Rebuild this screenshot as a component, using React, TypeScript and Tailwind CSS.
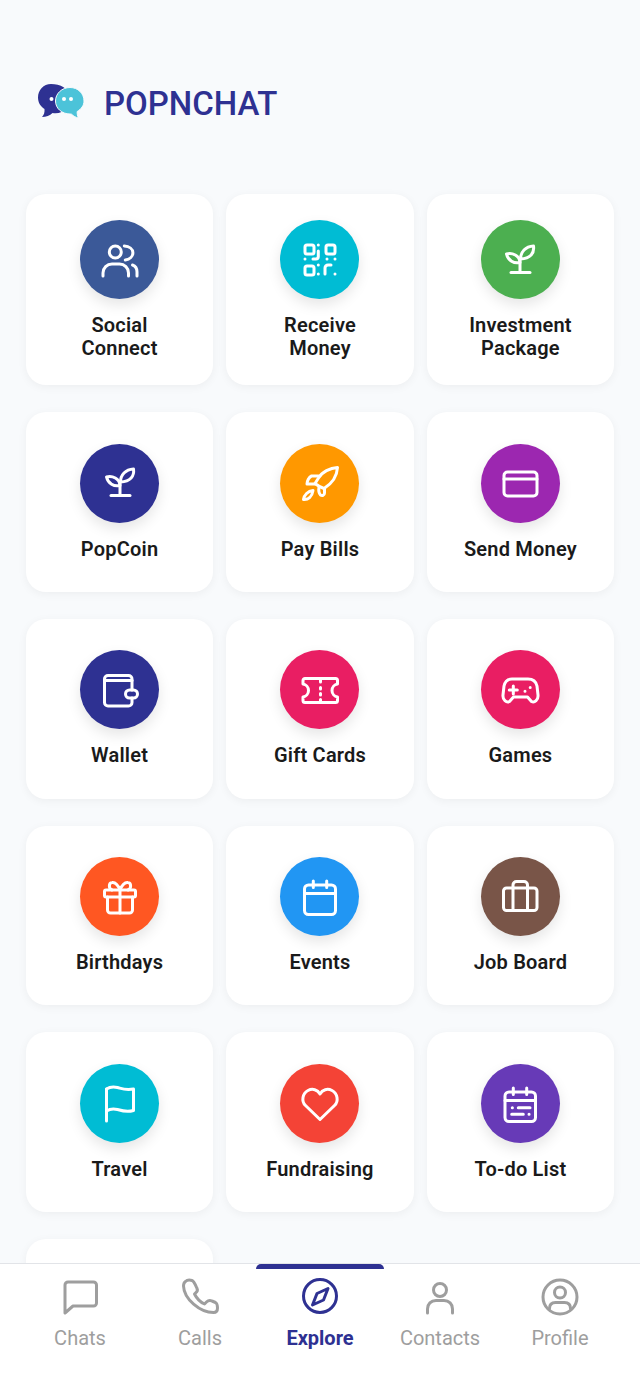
import type { ReactNode } from 'react';

const Glyph = ({ children, width = 3 }: { children: ReactNode; width?: number }) => (
  <svg
    viewBox="0 0 40 40"
    className="w-10 h-10"
    fill="none"
    stroke="currentColor"
    strokeWidth={width}
    strokeLinecap="round"
    strokeLinejoin="round"
  >
    {children}
  </svg>
);

const Sprout = () => (
  <Glyph>
    <path d="M11 32.5h19" />
    <path d="M20 32.5V19" />
    <path d="M6.5 14c6-1.5 13 1.5 13.5 8.5-6 1.5-12-2-13.5-8.5Z" />
    <path d="M33.5 6c1 7-3 12.5-13 13 0-7 5-12.5 13-13Z" />
  </Glyph>
);

const items: { label: ReactNode; bg: string; icon: ReactNode }[] = [
  {
    label: <>Social<br />Connect</>,
    bg: 'bg-[#3b5998]',
    icon: (
      <Glyph>
        <circle cx="15.3" cy="12" r="6" />
        <path d="M24.3 6c5 .3 8.6 3 8.6 6.7s-3 6.7-7.6 7.3" />
        <path d="M3 36v-3c0-5 4-9 9-9h7.5c5 0 9 4 9 9v3" />
        <path d="M32.5 25c3 1 4.5 4 4.5 7v4" />
      </Glyph>
    ),
  },
  {
    label: <>Receive<br />Money</>,
    bg: 'bg-[#00bcd4]',
    icon: (
      <Glyph>
        <rect x="5" y="5" width="9" height="9" rx="2" />
        <rect x="26" y="5" width="9" height="9" rx="2" />
        <rect x="5" y="26" width="9" height="9" rx="2" />
        <path d="M18.3 5v.1M18.3 11v5.5a2.5 2.5 0 0 1-2.5 2.5H13" />
        <path d="M5 19v.1M27 19v.1M35 19v.1M18.3 25v.1M18.3 34v.1M35 34v.1" />
        <path d="M25 34v-6a3 3 0 0 1 3-3h3" />
      </Glyph>
    ),
  },
  { label: <>Investment<br />Package</>, bg: 'bg-[#4caf50]', icon: <Sprout /> },
  { label: 'PopCoin', bg: 'bg-[#2e3192]', icon: <Sprout /> },
  {
    label: 'Pay Bills',
    bg: 'bg-[#ff9800]',
    icon: (
      <Glyph>
        <path d="M37.5 4.5C30 5 22 9 18.5 15L15 20.5c2.5 2 6 4 9 5 8-5 13-12 13.5-21Z" />
        <path d="M18.5 13h-7C9 14 7 18 7 21h8" />
        <path d="M24.5 25.5V30c0 2.5-2.5 3-4 2-1.5-1.5-2-5-1.500-8" />
        <path d="M13 27.5c-5 .5-9 4.5-9.5 9 4.5.5 8.5-2.5 9.5-9Z" />
      </Glyph>
    ),
  },
  {
    label: 'Send Money',
    bg: 'bg-[#9c27b0]',
    icon: (
      <Glyph>
        <rect x="4" y="9" width="33" height="24" rx="3.5" />
        <path d="M4 16h33" />
      </Glyph>
    ),
  },
  {
    label: 'Wallet',
    bg: 'bg-[#2e3192]',
    icon: (
      <Glyph>
        <path d="M32 20V9a3.5 3.5 0 0 0-3.5-3.5H8A3.5 3.5 0 0 0 4.5 9v23.5A3.5 3.5 0 0 0 8 36h20.5a3.5 3.5 0 0 0 3.5-3.5V28" />
        <path d="M4.5 10.5H32" />
        <rect x="25.5" y="20" width="12" height="8" rx="4" />
      </Glyph>
    ),
  },
  {
    label: 'Gift Cards',
    bg: 'bg-[#e91e63]',
    icon: (
      <Glyph>
        <path d="M5 8.5h30.5a2 2 0 0 1 2 2V14c-3 .5-5.500 3-5.500 6.500s2.500 6 5.500 6.500v3.500a2 2 0 0 1-2 2H5a2 2 0 0 1-2-2V27c3-.5 5.500-3 5.500-6.500S6 14.500 3 14v-3.500a2 2 0 0 1 2-2Z" />
        <path d="M20.5 9v3M20.5 17.5V19M20.5 23.5V25M20.5 29.5V32" />
      </Glyph>
    ),
  },
  {
    label: 'Games',
    bg: 'bg-[#e91e63]',
    icon: (
      <Glyph>
        <path d="M12 9h16c5 0 8 2.5 9 7l1 9c.5 5-3.5 8-6.5 6.5L27.5 27h-14l-4 4.5C6.5 33 2.500 30 3 25l1-9c1-4.500 4-7 8-7Z" />
        <path d="M13.3 16v8M9.3 20h8" />
        <path d="M25 21.2v.1M30.2 17.5v.1" />
      </Glyph>
    ),
  },
  {
    label: 'Birthdays',
    bg: 'bg-[#ff5722]',
    icon: (
      <Glyph>
        <rect x="4.5" y="13" width="31" height="7" rx="1.5" />
        <path d="M7.5 20v13a3 3 0 0 0 3 3h19a3 3 0 0 0 3-3V20" />
        <path d="M20 13v23" />
        <path d="M20 13c-2-5-5-8-8-7.500-3.500.5-3.500 6 0 7.500M20 13c2-5 5-8 8-7.500 3.500.5 3.500 6 0 7.500" />
      </Glyph>
    ),
  },
  {
    label: 'Events',
    bg: 'bg-[#2196f3]',
    icon: (
      <Glyph>
        <rect x="4.5" y="8" width="31" height="29.5" rx="4" />
        <path d="M4.5 16.5h31M13.3 4v6.5M26.7 4v6.5" />
      </Glyph>
    ),
  },
  {
    label: 'Job Board',
    bg: 'bg-[#795548]',
    icon: (
      <Glyph>
        <rect x="3.5" y="11" width="33.5" height="22.5" rx="3" />
        <path d="M13 33.5V8a3.5 3.5 0 0 1 3.5-3.5H24A3.5 3.5 0 0 1 27.5 8v25.5" />
      </Glyph>
    ),
  },
  {
    label: 'Travel',
    bg: 'bg-[#00bcd4]',
    icon: (
      <Glyph>
        <path d="M6.5 37V5" />
        <path d="M6.5 5c3-2 7-2.500 11-1.500s8 3 16 1.500v21.500c-7 2-11 .5-16-1-4-1-8-.5-11 1.500" />
      </Glyph>
    ),
  },
  {
    label: 'Fundraising',
    bg: 'bg-[#f44336]',
    icon: (
      <Glyph>
        <path d="M20 35.5 5.5 21.5C1 17 2.5 9.5 8 6.5c4.5-2.300 9.5-1 12 3.500 2.500-4.500 7.500-5.800 12-3.500 5.500 3 7 10.500 2.500 15L20 35.5Z" />
      </Glyph>
    ),
  },
  {
    label: 'To-do List',
    bg: 'bg-[#673ab7]',
    icon: (
      <Glyph>
        <rect x="5" y="8" width="30.5" height="29.5" rx="4" />
        <path d="M5 16.5h30.5M13.3 4v6.5M26.7 4v6.5" />
        <path d="M12.3 23.7h.1M18.3 23.7H30M11.7 30.3h11.6M29 30.3h.1" />
      </Glyph>
    ),
  },
  { label: '', bg: '', icon: null },
];

const tabs: { label: string; active?: boolean; icon: ReactNode }[] = [
  {
    label: 'Chats',
    icon: (
      <Glyph>
        <path d="M8 5h25.5a3 3 0 0 1 3 3v18a3 3 0 0 1-3 3H13l-8 7V8a3 3 0 0 1 3-3Z" />
      </Glyph>
    ),
  },
  {
    label: 'Calls',
    icon: (
      <Glyph>
        <path d="M5.5 4.500C7 3 10 3 12 3.500c2 .5 3.500 4.500 5 8 1 2 0 3.500-1.500 4.500l-1 1c2 4 5.500 8 10 10l2-2c1.500-1.500 3.500-2 5.500-1l3.500 1.500c2 1 2 3.500 2 5.500 0 3.500-2 4.500-4 4.500-13.500 0-29.500-13.500-30-26.500 0-2 .5-3.500 2-4.500Z" />
      </Glyph>
    ),
  },
  {
    label: 'Explore',
    active: true,
    icon: (
      <Glyph>
        <circle cx="20" cy="19" r="16.5" />
        <path d="M28 11.500 23.500 23l-11 5L17 16.500Z" />
      </Glyph>
    ),
  },
  {
    label: 'Contacts',
    icon: (
      <Glyph>
        <circle cx="20" cy="13" r="6.5" />
        <path d="M7.5 36v-4c0-5 3.500-8.500 8.500-8.500h8c5 0 8.500 3.500 8.500 8.500v4" />
      </Glyph>
    ),
  },
  {
    label: 'Profile',
    icon: (
      <Glyph>
        <circle cx="20" cy="20" r="17" />
        <circle cx="20" cy="15.5" r="5.5" />
        <path d="M9.500 31.500c0-4 2.500-6 6-6h9c3.500 0 6 2 6 6" />
      </Glyph>
    ),
  },
];

export default function App() {
  return (
    <div className="h-[1385px] flex flex-col overflow-hidden bg-[#f8fafc] [font-family:Roboto,sans-serif]">
      <main className="flex-1 min-h-0 overflow-hidden">
        <header className="flex items-start gap-[20px] pl-[38px] pt-[84px] h-[194px]">
          <svg viewBox="0 0 46 36" className="w-[46px] h-[36px]">
            <path d="M13 0C5.500 0 0 6 0 13.500c0 5 2.500 9 6.500 11.500.3 3-.5 6-2.500 8 4 0 8-1.500 10.500-4 1 .2 2 .2 3 .2 9 0 14-6.500 14-15.700S22 0 13 0Z" fill="#2e3192" />
            <path d="M32 3.500c-8 0-14.500 6-14.500 13.500S24 30 32 30c.5 0 1 0 1.500.2 2 2 4.500 3.300 7 3.800-1-2-1.500-4-1.300-6.500 4-2.500 6.800-6 6.800-10.500 0-7.500-6-13.500-14-13.500Z" fill="#4cc3d9" stroke="#f8fafc" strokeWidth="1" />
            <circle cx="13.5" cy="15" r="2" fill="#fff" />
            <circle cx="26" cy="15" r="2" fill="#fff" />
            <circle cx="33" cy="15" r="2" fill="#fff" />
          </svg>
          <h1 className="text-[33px] leading-[40px] font-medium text-[#2e3192]">POPNCHAT</h1>
        </header>

        <div className="grid grid-cols-3 gap-x-[13.33px] gap-y-[27px] px-[26px]">
          {items.map((item, i) => (
            <div
              key={i}
              className="min-h-[179.8px] rounded-[20px] bg-white shadow-[0_2px_10px_rgba(0,0,0,0.05)] px-2 py-[26px] flex flex-col items-center justify-center"
            >
              {item.icon && (
                <>
                  <div className={`w-[79px] h-[79px] rounded-full flex items-center justify-center text-white shadow-[0_6px_14px_rgba(0,0,0,0.1)] ${item.bg}`}>
                    {item.icon}
                  </div>
                  <p className="mt-[15px] text-center text-[20px] leading-[22.5px] font-semibold tracking-[0.01em] text-[#1a1a1a]">{item.label}</p>
                </>
              )}
            </div>
          ))}
        </div>
      </main>

      <nav className="relative z-10 h-[122px] shrink-0 bg-white border-t border-[#e2e4e8] flex px-[20px]">
        {tabs.map(tab => (
          <div
            key={tab.label}
            className={`relative flex-1 flex flex-col items-center pt-[13px] ${tab.active ? 'text-[#2e3192]' : 'text-[#9e9e9e]'}`}
          >
            {tab.active && <span className="absolute top-0 -left-1 -right-1 h-[5px] rounded-t-[5px] bg-[#2e3192]" />}
            {tab.icon}
            <span className={`mt-[9px] text-[20px] leading-[24px] ${tab.active ? 'font-bold' : 'font-normal'}`}>{tab.label}</span>
          </div>
        ))}
      </nav>
    </div>
  );
}
